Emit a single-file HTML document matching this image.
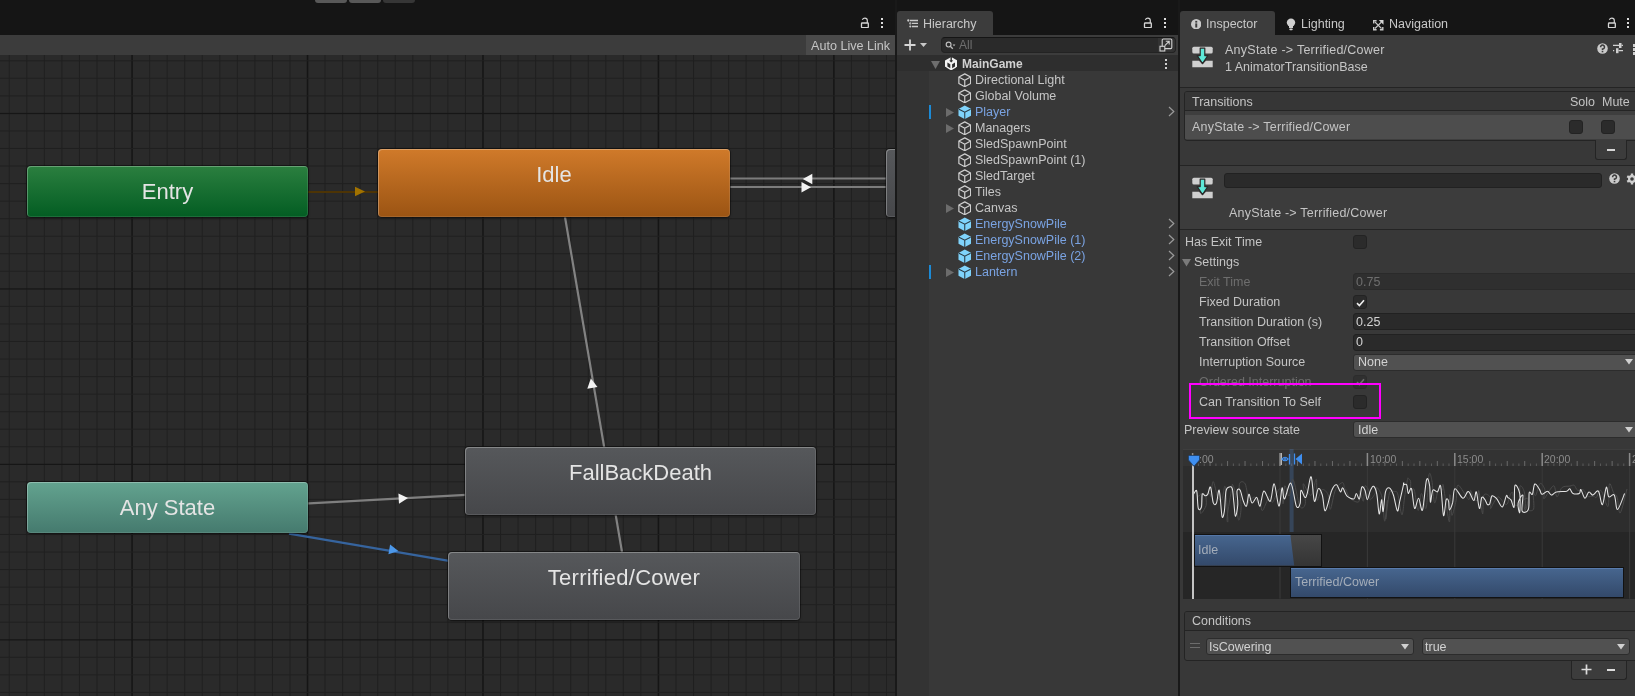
<!DOCTYPE html>
<html><head><meta charset="utf-8">
<style>
*{box-sizing:border-box;margin:0;padding:0}
html,body{width:1635px;height:696px;overflow:hidden;background:#151515;font-family:"Liberation Sans",sans-serif;}
.a{position:absolute}
.t{position:absolute;white-space:nowrap;will-change:transform;font-size:12.6px;color:#c4c4c4;line-height:16px}
.node{position:absolute;border-radius:4px;box-shadow:0 0 0 1px rgba(0,0,0,.35), 0 1px 3px rgba(0,0,0,.3), inset 1px 1px 0 rgba(255,255,255,.2), inset 0 0 0 1px rgba(255,255,255,.1)}
.nl{position:absolute;will-change:transform;left:0;right:0;top:15px;text-align:center;font-size:22px;line-height:22px;color:#e4e4e4}
</style></head><body>
<!-- GRAPH PANEL -->
<div class="a" style="left:0;top:0;width:895px;height:35px;background:#151515"></div>
<div class="a" style="left:315px;top:0;width:32px;height:3px;background:#585858;border-radius:0 0 3px 3px"></div>
<div class="a" style="left:349px;top:0;width:32px;height:3px;background:#585858;border-radius:0 0 3px 3px"></div>
<div class="a" style="left:383px;top:0;width:32px;height:3px;background:#363636;border-radius:0 0 3px 3px"></div>
<div class="a" style="left:0;top:35px;width:895px;height:20px;background:#3c3c3c"></div>
<div class="a" style="left:806px;top:35px;width:89px;height:20px;background:#4a4a4a"></div>
<div class="t" style="left:811px;top:37.6px;color:#c4c4c4">Auto Live Link</div>
<svg class="a" style="left:0;top:0" width="895" height="696">
<rect x="0" y="55" width="895" height="641" fill="#2a2a2a"/>
<rect x="8.75" y="55" width="1" height="641" fill="#202020"/>
<rect x="26.30" y="55" width="1" height="641" fill="#202020"/>
<rect x="43.84" y="55" width="1" height="641" fill="#202020"/>
<rect x="61.39" y="55" width="1" height="641" fill="#202020"/>
<rect x="78.93" y="55" width="1" height="641" fill="#202020"/>
<rect x="96.48" y="55" width="1" height="641" fill="#202020"/>
<rect x="114.02" y="55" width="1" height="641" fill="#202020"/>
<rect x="131.32" y="55" width="1.5" height="641" fill="#151515"/>
<rect x="149.12" y="55" width="1" height="641" fill="#202020"/>
<rect x="166.66" y="55" width="1" height="641" fill="#202020"/>
<rect x="184.21" y="55" width="1" height="641" fill="#202020"/>
<rect x="201.75" y="55" width="1" height="641" fill="#202020"/>
<rect x="219.30" y="55" width="1" height="641" fill="#202020"/>
<rect x="236.84" y="55" width="1" height="641" fill="#202020"/>
<rect x="254.39" y="55" width="1" height="641" fill="#202020"/>
<rect x="271.93" y="55" width="1" height="641" fill="#202020"/>
<rect x="289.48" y="55" width="1" height="641" fill="#202020"/>
<rect x="306.77" y="55" width="1.5" height="641" fill="#151515"/>
<rect x="324.57" y="55" width="1" height="641" fill="#202020"/>
<rect x="342.11" y="55" width="1" height="641" fill="#202020"/>
<rect x="359.66" y="55" width="1" height="641" fill="#202020"/>
<rect x="377.20" y="55" width="1" height="641" fill="#202020"/>
<rect x="394.75" y="55" width="1" height="641" fill="#202020"/>
<rect x="412.29" y="55" width="1" height="641" fill="#202020"/>
<rect x="429.84" y="55" width="1" height="641" fill="#202020"/>
<rect x="447.38" y="55" width="1" height="641" fill="#202020"/>
<rect x="464.93" y="55" width="1" height="641" fill="#202020"/>
<rect x="482.22" y="55" width="1.5" height="641" fill="#151515"/>
<rect x="500.02" y="55" width="1" height="641" fill="#202020"/>
<rect x="517.56" y="55" width="1" height="641" fill="#202020"/>
<rect x="535.11" y="55" width="1" height="641" fill="#202020"/>
<rect x="552.65" y="55" width="1" height="641" fill="#202020"/>
<rect x="570.20" y="55" width="1" height="641" fill="#202020"/>
<rect x="587.74" y="55" width="1" height="641" fill="#202020"/>
<rect x="605.29" y="55" width="1" height="641" fill="#202020"/>
<rect x="622.83" y="55" width="1" height="641" fill="#202020"/>
<rect x="640.38" y="55" width="1" height="641" fill="#202020"/>
<rect x="657.67" y="55" width="1.5" height="641" fill="#151515"/>
<rect x="675.46" y="55" width="1" height="641" fill="#202020"/>
<rect x="693.01" y="55" width="1" height="641" fill="#202020"/>
<rect x="710.55" y="55" width="1" height="641" fill="#202020"/>
<rect x="728.10" y="55" width="1" height="641" fill="#202020"/>
<rect x="745.64" y="55" width="1" height="641" fill="#202020"/>
<rect x="763.19" y="55" width="1" height="641" fill="#202020"/>
<rect x="780.73" y="55" width="1" height="641" fill="#202020"/>
<rect x="798.28" y="55" width="1" height="641" fill="#202020"/>
<rect x="815.82" y="55" width="1" height="641" fill="#202020"/>
<rect x="833.12" y="55" width="1.5" height="641" fill="#151515"/>
<rect x="850.91" y="55" width="1" height="641" fill="#202020"/>
<rect x="868.46" y="55" width="1" height="641" fill="#202020"/>
<rect x="886.00" y="55" width="1" height="641" fill="#202020"/>
<rect x="0" y="60.27" width="895" height="1" fill="#202020"/>
<rect x="0" y="77.81" width="895" height="1" fill="#202020"/>
<rect x="0" y="95.36" width="895" height="1" fill="#202020"/>
<rect x="0" y="112.90" width="895" height="1.2" fill="#161616"/>
<rect x="0" y="130.44" width="895" height="1" fill="#202020"/>
<rect x="0" y="147.99" width="895" height="1" fill="#202020"/>
<rect x="0" y="165.54" width="895" height="1" fill="#202020"/>
<rect x="0" y="183.08" width="895" height="1" fill="#202020"/>
<rect x="0" y="200.63" width="895" height="1" fill="#202020"/>
<rect x="0" y="218.17" width="895" height="1" fill="#202020"/>
<rect x="0" y="235.72" width="895" height="1" fill="#202020"/>
<rect x="0" y="253.26" width="895" height="1" fill="#202020"/>
<rect x="0" y="270.81" width="895" height="1" fill="#202020"/>
<rect x="0" y="288.35" width="895" height="1.2" fill="#161616"/>
<rect x="0" y="305.90" width="895" height="1" fill="#202020"/>
<rect x="0" y="323.44" width="895" height="1" fill="#202020"/>
<rect x="0" y="340.99" width="895" height="1" fill="#202020"/>
<rect x="0" y="358.53" width="895" height="1" fill="#202020"/>
<rect x="0" y="376.08" width="895" height="1" fill="#202020"/>
<rect x="0" y="393.62" width="895" height="1" fill="#202020"/>
<rect x="0" y="411.17" width="895" height="1" fill="#202020"/>
<rect x="0" y="428.71" width="895" height="1" fill="#202020"/>
<rect x="0" y="446.26" width="895" height="1" fill="#202020"/>
<rect x="0" y="463.80" width="895" height="1.2" fill="#161616"/>
<rect x="0" y="481.35" width="895" height="1" fill="#202020"/>
<rect x="0" y="498.89" width="895" height="1" fill="#202020"/>
<rect x="0" y="516.44" width="895" height="1" fill="#202020"/>
<rect x="0" y="533.98" width="895" height="1" fill="#202020"/>
<rect x="0" y="551.53" width="895" height="1" fill="#202020"/>
<rect x="0" y="569.07" width="895" height="1" fill="#202020"/>
<rect x="0" y="586.62" width="895" height="1" fill="#202020"/>
<rect x="0" y="604.16" width="895" height="1" fill="#202020"/>
<rect x="0" y="621.71" width="895" height="1" fill="#202020"/>
<rect x="0" y="639.25" width="895" height="1.2" fill="#161616"/>
<rect x="0" y="656.79" width="895" height="1" fill="#202020"/>
<rect x="0" y="674.34" width="895" height="1" fill="#202020"/>
<rect x="0" y="691.88" width="895" height="1" fill="#202020"/>
</svg>
<div class="a" style="left:0;top:55px;width:895px;height:641px;overflow:hidden">
<svg class="a" style="left:0;top:-55px" width="895" height="696">
<line x1="308" y1="192" x2="378" y2="192" stroke="#4d3405" stroke-width="2.2"/>
<polygon points="365.0,191.5 355.0,196.2 355.0,186.8" fill="#a17200"/>
<line x1="730" y1="178.5" x2="887" y2="178.5" stroke="#7c7c7c" stroke-width="2.2"/>
<line x1="730" y1="187" x2="887" y2="187" stroke="#7c7c7c" stroke-width="2.2"/>
<polygon points="802.8,179.0 812.3,173.8 812.3,184.2" fill="#f2f2f2"/>
<polygon points="811.0,187.2 801.5,192.4 801.5,182.0" fill="#f2f2f2"/>
<line x1="565" y1="217" x2="622" y2="552" stroke="#828282" stroke-width="2.2"/>
<polygon points="590.8,378.5 597.5,387.0 587.3,388.7" fill="#f2f2f2"/>
<line x1="300" y1="503.9" x2="466" y2="494.9" stroke="#7f7f7f" stroke-width="2.2"/>
<polygon points="408.0,498.1 399.0,503.8 398.4,493.4" fill="#f2f2f2"/>
<line x1="289" y1="533.7" x2="449" y2="560.9" stroke="#36649e" stroke-width="2.2"/>
<polygon points="398.4,550.9 388.4,554.3 390.1,544.4" fill="#4c98ea"/>
</svg>
<div class="node" style="left:27px;top:111px;width:281px;height:51px;background:linear-gradient(#2b7f3f,#035d23)"><div class="nl">Entry</div></div>
<div class="node" style="left:27px;top:427px;width:281px;height:51px;background:linear-gradient(#63a38f,#457a6e)"><div class="nl">Any State</div></div>
<div class="node" style="left:378px;top:94px;width:352px;height:68px;background:linear-gradient(#d07a2a,#9b5413)"><div class="nl">Idle</div></div>
<div class="node" style="left:465px;top:392px;width:351px;height:68px;background:linear-gradient(#56585b,#46474a)"><div class="nl">FallBackDeath</div></div>
<div class="node" style="left:448px;top:497px;width:352px;height:68px;background:linear-gradient(#56585b,#46474a)"><div class="nl" style="letter-spacing:.3px">Terrified/Cower</div></div>
<div class="node" style="left:886px;top:94px;width:40px;height:68px;background:linear-gradient(#56585b,#46474a)"></div>
</div>
<!-- separators -->
<div class="a" style="left:895px;top:0;width:2px;height:696px;background:#191919"></div>
<!-- HIERARCHY -->
<div class="a" style="left:897px;top:11px;width:96px;height:24px;background:#3c3c3c;border-radius:3px 3px 0 0"></div>
<div class="a" style="left:897px;top:35px;width:281px;height:20px;background:#3c3c3c"></div>
<div class="a" style="left:897px;top:55px;width:281px;height:641px;background:#383838"></div>
<div class="a" style="left:897px;top:71px;width:32px;height:625px;background:#333333"></div>
<div class="a" style="left:897px;top:55px;width:281px;height:16px;background:#2e2e2e"></div>
<svg width="0" height="0" style="position:absolute">
<defs>
<symbol id="cube" viewBox="0 0 14 15"><path d="M7 0.9 L13.1 4.2 L13.1 10.9 L7 14.2 L0.9 10.9 L0.9 4.2 Z M0.9 4.2 L7 7.5 L13.1 4.2 M7 7.5 L7 14.2" fill="none" stroke="#cfcfcf" stroke-width="1.25" stroke-linejoin="round"/></symbol>
<symbol id="prefab" viewBox="0 0 14 15"><path d="M7 0.5 L13.5 4 L13.5 11.1 L7 14.6 L0.5 11.1 L0.5 4 Z" fill="#7fd3fb"/><path d="M1 4.3 L7 7.5 L13 4.3 M7 7.5 L7 14.4" fill="none" stroke="#2b3a44" stroke-width="1.1"/></symbol>
<symbol id="tri-r" viewBox="0 0 8 9"><path d="M0 0 L8 4.5 L0 9 Z" fill="#6c6c6c"/></symbol>
<symbol id="chev" viewBox="0 0 7 11"><path d="M1 1 L5.8 5.5 L1 10" fill="none" stroke="#9a9a9a" stroke-width="1.2"/></symbol>
</defs></svg>
<svg class="a" style="left:903px;top:38px" width="30" height="14"><path d="M7 1.5 V12.5 M1.5 7 H12.5" stroke="#d6d6d6" stroke-width="1.8"/><path d="M17 5 L24 5 L20.5 9 Z" fill="#c8c8c8"/></svg>
<div class="a" style="left:940.5px;top:37px;width:235px;height:16px;background:#2a2a2a;border:1px solid #232323;border-top-color:#151515;border-radius:4px"></div>
<div class="a" style="left:1157.5px;top:38px;width:17px;height:14px;background:#333333;border-radius:0 3px 3px 0"></div>
<svg class="a" style="left:944.5px;top:40.5px" width="14" height="10"><circle cx="3.6" cy="3.6" r="2.4" fill="none" stroke="#bdbdbd" stroke-width="1.2"/><path d="M5.3 5.3 L7.8 7.8" stroke="#bdbdbd" stroke-width="1.3"/><path d="M7.6 3.6 L10.4 3.6 L9 5.3 Z" fill="#bdbdbd"/></svg>
<div class="t" style="left:959px;top:37px;font-size:12px;color:#6f6f6f">All</div>
<svg class="a" style="left:1159px;top:38px" width="14" height="14"><rect x="3.2" y="1" width="9.6" height="9.6" rx="1" fill="none" stroke="#d2d2d2" stroke-width="1.1"/><rect x="1" y="8.3" width="4.8" height="4.7" fill="#333" stroke="#d2d2d2" stroke-width="1.1"/><path d="M5.8 7.6 L10 3.4 M6.8 3.2 H10.2 V6.6" fill="none" stroke="#d2d2d2" stroke-width="1.1"/></svg>

<svg class="a" style="left:1143px;top:17px" width="10" height="11"><path d="M2.3 2.7 Q3.2 1.1 4.9 1.1 Q7.3 1.1 7.3 3.6 V6" fill="none" stroke="#d4d4d4" stroke-width="1.2"/><rect x="1.5" y="6" width="6.8" height="4.6" rx="0.6" fill="none" stroke="#d4d4d4" stroke-width="1.3"/></svg>
<div class="a" style="left:1163.6px;top:17.6px;width:2.2px;height:2.2px;background:#dcdcdc;box-shadow:0 4px 0 #dcdcdc,0 8px 0 #dcdcdc"></div>
<div class="t" style="left:923px;top:16px;font-size:12.5px;line-height:17px;color:#c8c8c8">Hierarchy</div>
<svg class="a" style="left:906px;top:18px" width="13" height="11"><path d="M4 2.5 H12 M6 5.4 H12 M6 8.5 H12" stroke="#cacaca" stroke-width="1.3"/><circle cx="2.3" cy="2.5" r="1.15" fill="#cacaca"/><circle cx="4.3" cy="5.4" r="1.1" fill="#cacaca"/><circle cx="4.3" cy="8.5" r="1.1" fill="#cacaca"/><path d="M4.3 3.8 V7.5" stroke="#888" stroke-width="0.6"/></svg>
<svg class="a" style="left:931px;top:61px" width="9" height="8"><path d="M0 0 H9 L4.5 8 Z" fill="#6e6e6e"/></svg>
<svg class="a" style="left:944.8px;top:57px" width="12.4" height="13.4" viewBox="0 0 12.4 13.4"><path d="M6.2 0 L12.4 3.4 L12.4 9.8 L6.2 13.4 L0 9.8 L0 3.4 Z" fill="#f2f2f2"/><path d="M5.5 0 H6.9 V3.3 L8.2 3.6 L6.2 5.4 L4.2 3.6 L5.5 3.3 Z" fill="#2d2d2d"/><path d="M2.4 5.6 L5.3 7.3 L5.3 11.3 L2.4 9.6 Z" fill="#2d2d2d"/><path d="M10 5.6 L7.1 7.3 L7.1 11.3 L10 9.6 Z" fill="#2d2d2d"/><path d="M0 9.8 L1.6 10.6 L0 11.6 Z M12.4 9.8 L10.8 10.6 L12.4 11.6 Z" fill="#2d2d2d"/></svg>
<div class="t" style="left:962px;top:56px;font-size:12px;line-height:17px;font-weight:bold;color:#d2d2d2">MainGame</div>
<div class="a" style="left:1165px;top:58.6px;width:2.2px;height:2.2px;background:#d0d0d0;box-shadow:0 4px 0 #d0d0d0,0 8px 0 #d0d0d0"></div>
<svg class="a" style="left:957.8px;top:72.8px" width="13.5" height="14.5" viewBox="0 0 14 15"><use href="#cube"/></svg>
<div class="t" style="left:975px;top:72.00px;font-size:12.5px;line-height:17px;color:#c6c6c6">Directional Light</div>
<svg class="a" style="left:957.8px;top:88.8px" width="13.5" height="14.5" viewBox="0 0 14 15"><use href="#cube"/></svg>
<div class="t" style="left:975px;top:88.00px;font-size:12.5px;line-height:17px;color:#c6c6c6">Global Volume</div>
<div class="a" style="left:929px;top:105px;width:2px;height:14px;background:#1c8ad6"></div>
<svg class="a" style="left:946px;top:108px" width="8" height="9"><use href="#tri-r"/></svg>
<svg class="a" style="left:957.8px;top:104.8px" width="13.5" height="14.5" viewBox="0 0 14 15"><use href="#prefab"/></svg>
<div class="t" style="left:975px;top:104.00px;font-size:12.5px;line-height:17px;color:#7aa3e2">Player</div>
<svg class="a" style="left:1167.5px;top:105.5px" width="7" height="11"><use href="#chev"/></svg>
<svg class="a" style="left:946px;top:124px" width="8" height="9"><use href="#tri-r"/></svg>
<svg class="a" style="left:957.8px;top:120.8px" width="13.5" height="14.5" viewBox="0 0 14 15"><use href="#cube"/></svg>
<div class="t" style="left:975px;top:120.00px;font-size:12.5px;line-height:17px;color:#c6c6c6">Managers</div>
<svg class="a" style="left:957.8px;top:136.8px" width="13.5" height="14.5" viewBox="0 0 14 15"><use href="#cube"/></svg>
<div class="t" style="left:975px;top:136.00px;font-size:12.5px;line-height:17px;color:#c6c6c6">SledSpawnPoint</div>
<svg class="a" style="left:957.8px;top:152.8px" width="13.5" height="14.5" viewBox="0 0 14 15"><use href="#cube"/></svg>
<div class="t" style="left:975px;top:152.00px;font-size:12.5px;line-height:17px;color:#c6c6c6">SledSpawnPoint (1)</div>
<svg class="a" style="left:957.8px;top:168.8px" width="13.5" height="14.5" viewBox="0 0 14 15"><use href="#cube"/></svg>
<div class="t" style="left:975px;top:168.00px;font-size:12.5px;line-height:17px;color:#c6c6c6">SledTarget</div>
<svg class="a" style="left:957.8px;top:184.8px" width="13.5" height="14.5" viewBox="0 0 14 15"><use href="#cube"/></svg>
<div class="t" style="left:975px;top:184.00px;font-size:12.5px;line-height:17px;color:#c6c6c6">Tiles</div>
<svg class="a" style="left:946px;top:204px" width="8" height="9"><use href="#tri-r"/></svg>
<svg class="a" style="left:957.8px;top:200.8px" width="13.5" height="14.5" viewBox="0 0 14 15"><use href="#cube"/></svg>
<div class="t" style="left:975px;top:200.00px;font-size:12.5px;line-height:17px;color:#c6c6c6">Canvas</div>
<svg class="a" style="left:957.8px;top:216.8px" width="13.5" height="14.5" viewBox="0 0 14 15"><use href="#prefab"/></svg>
<div class="t" style="left:975px;top:216.00px;font-size:12.5px;line-height:17px;color:#7aa3e2">EnergySnowPile</div>
<svg class="a" style="left:1167.5px;top:217.5px" width="7" height="11"><use href="#chev"/></svg>
<svg class="a" style="left:957.8px;top:232.8px" width="13.5" height="14.5" viewBox="0 0 14 15"><use href="#prefab"/></svg>
<div class="t" style="left:975px;top:232.00px;font-size:12.5px;line-height:17px;color:#7aa3e2">EnergySnowPile (1)</div>
<svg class="a" style="left:1167.5px;top:233.5px" width="7" height="11"><use href="#chev"/></svg>
<svg class="a" style="left:957.8px;top:248.8px" width="13.5" height="14.5" viewBox="0 0 14 15"><use href="#prefab"/></svg>
<div class="t" style="left:975px;top:248.00px;font-size:12.5px;line-height:17px;color:#7aa3e2">EnergySnowPile (2)</div>
<svg class="a" style="left:1167.5px;top:249.5px" width="7" height="11"><use href="#chev"/></svg>
<div class="a" style="left:929px;top:265px;width:2px;height:14px;background:#1c8ad6"></div>
<svg class="a" style="left:946px;top:268px" width="8" height="9"><use href="#tri-r"/></svg>
<svg class="a" style="left:957.8px;top:264.8px" width="13.5" height="14.5" viewBox="0 0 14 15"><use href="#prefab"/></svg>
<div class="t" style="left:975px;top:264.00px;font-size:12.5px;line-height:17px;color:#7aa3e2">Lantern</div>
<svg class="a" style="left:1167.5px;top:265.5px" width="7" height="11"><use href="#chev"/></svg>
<div class="a" style="left:1178px;top:0;width:2px;height:696px;background:#191919"></div>
<!-- INSPECTOR -->
<div class="a" style="left:1180px;top:11px;width:95px;height:24px;background:#3c3c3c;border-radius:3px 3px 0 0"></div>
<div class="a" style="left:1180px;top:35px;width:455px;height:661px;background:#383838"></div>
<div class="a" style="left:1180px;top:35px;width:455px;height:52px;background:#3c3c3c"></div>
<svg class="a" style="left:1190.9px;top:19px" width="10.4" height="10.4" viewBox="0 0 10 10"><circle cx="5" cy="5" r="5" fill="#c9c9c9"/><rect x="4.1" y="4.2" width="1.9" height="4" fill="#3c3c3c"/><rect x="4.1" y="1.8" width="1.9" height="1.7" fill="#3c3c3c"/></svg>
<div class="t" style="left:1206.4px;top:15.87px;font-size:12.5px;line-height:17px;color:#c8c8c8;">Inspector</div>
<svg class="a" style="left:1286px;top:18px" width="10" height="13" viewBox="0 0 10 13"><circle cx="5" cy="4.6" r="4.2" fill="#cfcfcf"/><rect x="3" y="7.5" width="4" height="2.5" fill="#cfcfcf"/><rect x="3.3" y="10.6" width="3.4" height="1.6" rx="0.8" fill="#cfcfcf"/></svg>
<div class="t" style="left:1301.3px;top:15.87px;font-size:12.5px;line-height:17px;color:#c8c8c8;">Lighting</div>
<svg class="a" style="left:1373px;top:20px" width="10.5" height="10.5" viewBox="0 0 10.5 10.5"><path d="M0.7 3.6 V0.7 H3.6 M0.7 6.9 V9.8 H3.6 M6.9 9.8 H9.8 V6.9" fill="none" stroke="#c8c8c8" stroke-width="1.4"/><path d="M5.8 0 H10.5 V4.7 Z" fill="#d8d8d8"/><path d="M2 8.5 L8.5 2 M2 2 L8.5 8.5" stroke="#c8c8c8" stroke-width="1.1"/></svg>
<div class="t" style="left:1389px;top:15.87px;font-size:12.5px;line-height:17px;color:#c8c8c8;">Navigation</div>
<svg class="a" style="left:1606.5px;top:17px" width="10" height="11"><path d="M2.3 2.7 Q3.2 1.1 4.9 1.1 Q7.3 1.1 7.3 3.6 V6" fill="none" stroke="#d4d4d4" stroke-width="1.2"/><rect x="1.5" y="6" width="6.8" height="4.6" rx="0.6" fill="none" stroke="#d4d4d4" stroke-width="1.3"/></svg>
<div class="a" style="left:1626.7px;top:17.6px;width:2.2px;height:2.2px;background:#dcdcdc;box-shadow:0 4px 0 #dcdcdc,0 8px 0 #dcdcdc"></div>
<svg class="a" style="left:860px;top:17px" width="10" height="11"><path d="M2.3 2.7 Q3.2 1.1 4.9 1.1 Q7.3 1.1 7.3 3.6 V6" fill="none" stroke="#d4d4d4" stroke-width="1.2"/><rect x="1.5" y="6" width="6.8" height="4.6" rx="0.6" fill="none" stroke="#d4d4d4" stroke-width="1.3"/></svg>
<div class="a" style="left:880.9px;top:17.6px;width:2.2px;height:2.2px;background:#dcdcdc;box-shadow:0 4px 0 #dcdcdc,0 8px 0 #dcdcdc"></div>
<svg class="a" style="left:1191.8px;top:45.8px" width="21" height="22" viewBox="0 0 21 22"><rect x="0.3" y="0.8" width="20.4" height="6.6" rx="1.5" fill="#cfcfcf"/><path d="M0.3 14.8 H7 L10.5 18.3 L14 14.8 H20.7 V21.3 H0.3 Z" fill="#cfcfcf"/><path d="M8.2 2.2 H12.8 V9.6 H15.8 L10.5 17.6 L5.2 9.6 H8.2 Z" fill="#5ee9d9" stroke="#2a2a2a" stroke-width="1.2" stroke-linejoin="round"/></svg>
<div class="t" style="left:1224.9px;top:41.57px;font-size:12.5px;line-height:17px;color:#c6c6c6;letter-spacing:.25px">AnyState -&gt; Terrified/Cower</div>
<div class="t" style="left:1224.9px;top:59.37px;font-size:12.5px;line-height:17px;color:#c6c6c6;">1 AnimatorTransitionBase</div>
<svg class="a" style="left:1596.6px;top:42.6px" width="11" height="11" viewBox="0 0 11 11"><circle cx="5.5" cy="5.5" r="5.3" fill="#cacaca"/><path d="M3.6 4.2 A1.95 1.95 0 1 1 5.5 6 V7" fill="none" stroke="#3c3c3c" stroke-width="1.5"/><rect x="4.7" y="7.8" width="1.6" height="1.5" fill="#3c3c3c"/></svg>
<svg class="a" style="left:1612px;top:42px" width="12" height="12" viewBox="0 0 12 12"><path d="M1 3.4 H7 M9.5 3.4 H11 M1 8.6 H2.2 M6.5 8.6 H11" stroke="#d0d0d0" stroke-width="1.2"/><rect x="7" y="1" width="2.5" height="5" fill="#d0d0d0"/><rect x="4" y="6.2" width="2.5" height="5" fill="#d0d0d0"/></svg>
<div class="a" style="left:1632.5px;top:44px;width:3px;height:2.5px;background:#d0d0d0;box-shadow:0 4px 0 #d0d0d0,0 8px 0 #d0d0d0"></div>
<div class="a" style="left:1180px;top:87px;width:455px;height:1px;background:#242424"></div>
<div class="a" style="left:1184.2px;top:91.2px;width:460px;height:50px;border:1px solid #242424;border-radius:3px;background:#3e3e3e;overflow:hidden">
<div class="a" style="left:0;top:0;width:460px;height:18.5px;background:#363636;border-bottom:1px solid #242424"></div>
<div class="a" style="left:0;top:22.5px;width:460px;height:24px;background:#4d4d4d"></div>
</div>
<div class="t" style="left:1192.4px;top:93.57px;font-size:12.5px;line-height:17px;color:#c4c4c4;">Transitions</div>
<div class="t" style="left:1570px;top:93.57px;font-size:12.5px;line-height:17px;color:#c4c4c4;">Solo</div>
<div class="t" style="left:1602px;top:93.57px;font-size:12.5px;line-height:17px;color:#c4c4c4;">Mute</div>
<div class="t" style="left:1192.4px;top:118.97px;font-size:12.5px;line-height:17px;color:#c4c4c4;letter-spacing:.2px">AnyState -&gt; Terrified/Cower</div>
<div class="a" style="left:1569px;top:120px;width:14px;height:14px;background:#2b2b2b;border:1px solid #232323;border-radius:3px"></div>
<div class="a" style="left:1601px;top:120px;width:14px;height:14px;background:#2b2b2b;border:1px solid #232323;border-radius:3px"></div>
<div class="a" style="left:1595.4px;top:140px;width:32px;height:20px;background:#3c3c3c;border:1px solid #242424;border-top:none;border-radius:0 0 3px 3px"></div>
<div class="a" style="left:1606.5px;top:149px;width:8px;height:2px;background:#d6d6d6"></div>

<div class="a" style="left:1180px;top:165px;width:455px;height:1px;background:#242424"></div>
<div class="a" style="left:1180px;top:166px;width:455px;height:63px;background:#3c3c3c"></div>
<svg class="a" style="left:1191.8px;top:176.9px" width="21" height="22" viewBox="0 0 21 22"><rect x="0.3" y="0.8" width="20.4" height="6.6" rx="1.5" fill="#cfcfcf"/><path d="M0.3 14.8 H7 L10.5 18.3 L14 14.8 H20.7 V21.3 H0.3 Z" fill="#cfcfcf"/><path d="M8.2 2.2 H12.8 V9.6 H15.8 L10.5 17.6 L5.2 9.6 H8.2 Z" fill="#5ee9d9" stroke="#2a2a2a" stroke-width="1.2" stroke-linejoin="round"/></svg>
<div class="a" style="left:1224px;top:172.5px;width:377.5px;height:15px;background:#2a2a2a;border:1px solid #212121;border-radius:3px"></div>
<svg class="a" style="left:1608.9px;top:173.3px" width="11" height="11" viewBox="0 0 11 11"><circle cx="5.5" cy="5.5" r="5.3" fill="#cacaca"/><path d="M3.6 4.2 A1.95 1.95 0 1 1 5.5 6 V7" fill="none" stroke="#3c3c3c" stroke-width="1.5"/><rect x="4.7" y="7.8" width="1.6" height="1.5" fill="#3c3c3c"/></svg>
<svg class="a" style="left:1626px;top:173px" width="12" height="12" viewBox="0 0 12 12"><circle cx="6" cy="6" r="4" fill="#d0d0d0"/><rect x="4.8" y="0.5" width="2.4" height="3" fill="#d0d0d0" transform="rotate(0 6 6)"/><rect x="4.8" y="0.5" width="2.4" height="3" fill="#d0d0d0" transform="rotate(60 6 6)"/><rect x="4.8" y="0.5" width="2.4" height="3" fill="#d0d0d0" transform="rotate(120 6 6)"/><rect x="4.8" y="0.5" width="2.4" height="3" fill="#d0d0d0" transform="rotate(180 6 6)"/><rect x="4.8" y="0.5" width="2.4" height="3" fill="#d0d0d0" transform="rotate(240 6 6)"/><rect x="4.8" y="0.5" width="2.4" height="3" fill="#d0d0d0" transform="rotate(300 6 6)"/><circle cx="6" cy="6" r="1.8" fill="#3c3c3c"/></svg>
<div class="t" style="left:1229px;top:205.27px;font-size:12.5px;line-height:17px;color:#c4c4c4;letter-spacing:.2px">AnyState -&gt; Terrified/Cower</div>
<div class="a" style="left:1180px;top:229px;width:455px;height:1px;background:#242424"></div>
<div class="t" style="left:1184.8px;top:234.37px;font-size:12.5px;line-height:17px;color:#c4c4c4;">Has Exit Time</div>
<div class="a" style="left:1353.4px;top:235px;width:14px;height:14px;background:#2b2b2b;border:1px solid #232323;border-radius:3px;"></div>
<svg class="a" style="left:1182px;top:259.2px" width="9" height="8"><path d="M0 0 H9 L4.5 7.5 Z" fill="#7a7a7a"/></svg>
<div class="t" style="left:1194.3px;top:253.97px;font-size:12.5px;line-height:17px;color:#c4c4c4;">Settings</div>
<div class="t" style="left:1199.4px;top:274.17px;font-size:12.5px;line-height:17px;color:#6e6e6e;">Exit Time</div>
<div class="a" style="left:1353.4px;top:273.3px;width:290px;height:17px;background:#2f2f2f;border:1px solid #2a2a2a;border-radius:3px"></div>
<div class="t" style="left:1356px;top:274.17px;font-size:12.5px;line-height:17px;color:#6e6e6e;">0.75</div>
<div class="t" style="left:1199.4px;top:294.27px;font-size:12.5px;line-height:17px;color:#c4c4c4;">Fixed Duration</div>
<div class="a" style="left:1353.4px;top:295.2px;width:14px;height:14px;background:#2b2b2b;border:1px solid #232323;border-radius:3px;"><svg class="a" style="left:2px;top:2.5px" width="9" height="8" viewBox="0 0 9 8"><path d="M1 4.2 L3.4 6.5 L8 1.3" fill="none" stroke="#eeeeee" stroke-width="1.6"/></svg></div>
<div class="t" style="left:1199.4px;top:314.27px;font-size:12.5px;line-height:17px;color:#c4c4c4;">Transition Duration (s)</div>
<div class="a" style="left:1353.4px;top:313.3px;width:290px;height:17px;background:#2a2a2a;border:1px solid #212121;border-radius:3px"></div>
<div class="t" style="left:1356px;top:314.27px;font-size:12.5px;line-height:17px;color:#d2d2d2;">0.25</div>
<div class="t" style="left:1199.4px;top:334.27px;font-size:12.5px;line-height:17px;color:#c4c4c4;">Transition Offset</div>
<div class="a" style="left:1353.4px;top:333.5px;width:290px;height:17px;background:#2a2a2a;border:1px solid #212121;border-radius:3px"></div>
<div class="t" style="left:1356px;top:334.27px;font-size:12.5px;line-height:17px;color:#d2d2d2;">0</div>
<div class="t" style="left:1199.4px;top:354.27px;font-size:12.5px;line-height:17px;color:#c4c4c4;">Interruption Source</div>
<div class="a" style="left:1353.4px;top:353.7px;width:290px;height:17px;background:#515151;border:1px solid #2c2c2c;border-radius:3px"></div>
<div class="t" style="left:1357.6px;top:354.27px;font-size:12.5px;line-height:17px;color:#d2d2d2;">None</div>
<svg class="a" style="left:1624.5px;top:359px" width="8" height="6"><path d="M0 0 H8 L4 5.5 Z" fill="#d0d0d0"/></svg>
<div class="t" style="left:1199.4px;top:374.27px;font-size:12.5px;line-height:17px;color:#6e6e6e;">Ordered Interruption</div>
<div class="a" style="left:1353.4px;top:374.9px;width:14px;height:14px;background:#2b2b2b;border:1px solid #232323;border-radius:3px;opacity:.55;"><svg class="a" style="left:2px;top:2.5px" width="9" height="8" viewBox="0 0 9 8"><path d="M1 4.2 L3.4 6.5 L8 1.3" fill="none" stroke="#9a9a9a" stroke-width="1.6"/></svg></div>
<div class="t" style="left:1199.4px;top:394.37px;font-size:12.5px;line-height:17px;color:#c4c4c4;">Can Transition To Self</div>
<div class="a" style="left:1353.4px;top:394.8px;width:14px;height:14px;background:#2b2b2b;border:1px solid #232323;border-radius:3px;"></div>
<div class="a" style="left:1189px;top:383px;width:192px;height:36px;border:2px solid #ff00ff"></div>
<div class="t" style="left:1184.3px;top:422.37px;font-size:12.5px;line-height:17px;color:#c4c4c4;">Preview source state</div>
<div class="a" style="left:1353.4px;top:421.4px;width:290px;height:17px;background:#515151;border:1px solid #2c2c2c;border-radius:3px"></div>
<div class="t" style="left:1357.6px;top:422.37px;font-size:12.5px;line-height:17px;color:#d2d2d2;">Idle</div>
<svg class="a" style="left:1624.5px;top:427px" width="8" height="6"><path d="M0 0 H8 L4 5.5 Z" fill="#d0d0d0"/></svg>
<div class="a" style="left:1183.4px;top:449.3px;width:451.6px;height:149.7px;background:#262626;overflow:hidden">
<div class="a" style="left:0;top:0;width:100%;height:17px;background:#333333;border-top:1px solid #3e3e3e"></div>
<div class="a" style="left:0;top:17px;width:100%;height:66px;background:#2d2d2d"></div>
</div>
<svg class="a" style="left:1183.4px;top:449.3px;overflow:hidden" width="451.6" height="149.7"><rect x="96.50" y="17" width="1" height="132.7" fill="#3a3a3a"/><rect x="183.90" y="17" width="1" height="132.7" fill="#3a3a3a"/><rect x="271.30" y="17" width="1" height="132.7" fill="#3a3a3a"/><rect x="358.70" y="17" width="1" height="132.7" fill="#3a3a3a"/><rect x="446.10" y="17" width="1" height="132.7" fill="#3a3a3a"/><rect x="8.85" y="4" width="1.5" height="13" fill="#8a8a8a"/><rect x="14.93" y="14.5" width="1" height="2.5" fill="#5a5a5a"/><rect x="20.75" y="14.5" width="1" height="2.5" fill="#5a5a5a"/><rect x="26.58" y="12" width="1" height="5" fill="#6a6a6a"/><rect x="32.41" y="14.5" width="1" height="2.5" fill="#5a5a5a"/><rect x="38.23" y="14.5" width="1" height="2.5" fill="#5a5a5a"/><rect x="44.06" y="12" width="1" height="5" fill="#6a6a6a"/><rect x="49.89" y="14.5" width="1" height="2.5" fill="#5a5a5a"/><rect x="55.71" y="14.5" width="1" height="2.5" fill="#5a5a5a"/><rect x="61.54" y="12" width="1" height="5" fill="#6a6a6a"/><rect x="67.37" y="14.5" width="1" height="2.5" fill="#5a5a5a"/><rect x="73.19" y="14.5" width="1" height="2.5" fill="#5a5a5a"/><rect x="79.02" y="12" width="1" height="5" fill="#6a6a6a"/><rect x="84.85" y="14.5" width="1" height="2.5" fill="#5a5a5a"/><rect x="90.67" y="14.5" width="1" height="2.5" fill="#5a5a5a"/><rect x="96.25" y="4" width="1.5" height="13" fill="#8a8a8a"/><rect x="102.33" y="14.5" width="1" height="2.5" fill="#5a5a5a"/><rect x="108.15" y="14.5" width="1" height="2.5" fill="#5a5a5a"/><rect x="113.98" y="12" width="1" height="5" fill="#6a6a6a"/><rect x="119.81" y="14.5" width="1" height="2.5" fill="#5a5a5a"/><rect x="125.63" y="14.5" width="1" height="2.5" fill="#5a5a5a"/><rect x="131.46" y="12" width="1" height="5" fill="#6a6a6a"/><rect x="137.29" y="14.5" width="1" height="2.5" fill="#5a5a5a"/><rect x="143.11" y="14.5" width="1" height="2.5" fill="#5a5a5a"/><rect x="148.94" y="12" width="1" height="5" fill="#6a6a6a"/><rect x="154.77" y="14.5" width="1" height="2.5" fill="#5a5a5a"/><rect x="160.59" y="14.5" width="1" height="2.5" fill="#5a5a5a"/><rect x="166.42" y="12" width="1" height="5" fill="#6a6a6a"/><rect x="172.25" y="14.5" width="1" height="2.5" fill="#5a5a5a"/><rect x="178.07" y="14.5" width="1" height="2.5" fill="#5a5a5a"/><rect x="183.65" y="4" width="1.5" height="13" fill="#8a8a8a"/><rect x="189.73" y="14.5" width="1" height="2.5" fill="#5a5a5a"/><rect x="195.55" y="14.5" width="1" height="2.5" fill="#5a5a5a"/><rect x="201.38" y="12" width="1" height="5" fill="#6a6a6a"/><rect x="207.21" y="14.5" width="1" height="2.5" fill="#5a5a5a"/><rect x="213.03" y="14.5" width="1" height="2.5" fill="#5a5a5a"/><rect x="218.86" y="12" width="1" height="5" fill="#6a6a6a"/><rect x="224.69" y="14.5" width="1" height="2.5" fill="#5a5a5a"/><rect x="230.51" y="14.5" width="1" height="2.5" fill="#5a5a5a"/><rect x="236.34" y="12" width="1" height="5" fill="#6a6a6a"/><rect x="242.17" y="14.5" width="1" height="2.5" fill="#5a5a5a"/><rect x="247.99" y="14.5" width="1" height="2.5" fill="#5a5a5a"/><rect x="253.82" y="12" width="1" height="5" fill="#6a6a6a"/><rect x="259.65" y="14.5" width="1" height="2.5" fill="#5a5a5a"/><rect x="265.47" y="14.5" width="1" height="2.5" fill="#5a5a5a"/><rect x="271.05" y="4" width="1.5" height="13" fill="#8a8a8a"/><rect x="277.13" y="14.5" width="1" height="2.5" fill="#5a5a5a"/><rect x="282.95" y="14.5" width="1" height="2.5" fill="#5a5a5a"/><rect x="288.78" y="12" width="1" height="5" fill="#6a6a6a"/><rect x="294.61" y="14.5" width="1" height="2.5" fill="#5a5a5a"/><rect x="300.43" y="14.5" width="1" height="2.5" fill="#5a5a5a"/><rect x="306.26" y="12" width="1" height="5" fill="#6a6a6a"/><rect x="312.09" y="14.5" width="1" height="2.5" fill="#5a5a5a"/><rect x="317.91" y="14.5" width="1" height="2.5" fill="#5a5a5a"/><rect x="323.74" y="12" width="1" height="5" fill="#6a6a6a"/><rect x="329.57" y="14.5" width="1" height="2.5" fill="#5a5a5a"/><rect x="335.39" y="14.5" width="1" height="2.5" fill="#5a5a5a"/><rect x="341.22" y="12" width="1" height="5" fill="#6a6a6a"/><rect x="347.05" y="14.5" width="1" height="2.5" fill="#5a5a5a"/><rect x="352.87" y="14.5" width="1" height="2.5" fill="#5a5a5a"/><rect x="358.45" y="4" width="1.5" height="13" fill="#8a8a8a"/><rect x="364.53" y="14.5" width="1" height="2.5" fill="#5a5a5a"/><rect x="370.35" y="14.5" width="1" height="2.5" fill="#5a5a5a"/><rect x="376.18" y="12" width="1" height="5" fill="#6a6a6a"/><rect x="382.01" y="14.5" width="1" height="2.5" fill="#5a5a5a"/><rect x="387.83" y="14.5" width="1" height="2.5" fill="#5a5a5a"/><rect x="393.66" y="12" width="1" height="5" fill="#6a6a6a"/><rect x="399.49" y="14.5" width="1" height="2.5" fill="#5a5a5a"/><rect x="405.31" y="14.5" width="1" height="2.5" fill="#5a5a5a"/><rect x="411.14" y="12" width="1" height="5" fill="#6a6a6a"/><rect x="416.97" y="14.5" width="1" height="2.5" fill="#5a5a5a"/><rect x="422.79" y="14.5" width="1" height="2.5" fill="#5a5a5a"/><rect x="428.62" y="12" width="1" height="5" fill="#6a6a6a"/><rect x="434.45" y="14.5" width="1" height="2.5" fill="#5a5a5a"/><rect x="440.27" y="14.5" width="1" height="2.5" fill="#5a5a5a"/><rect x="445.85" y="4" width="1.5" height="13" fill="#8a8a8a"/><rect x="106.60" y="0" width="4" height="83" fill="#4a78b8" fill-opacity="0.32"/><path d="M15.0,47.7 C15.8,47.3 19.1,42.5 19.5,45.3 C19.9,48.0 16.8,62.4 17.4,64.2 C18.0,66.1 22.1,59.5 23.1,56.5 C24.0,53.4 22.5,47.9 23.1,45.9 C23.7,43.8 25.9,44.0 26.7,44.2 C27.5,44.4 27.3,49.1 27.9,47.1 C28.5,45.2 29.0,32.3 30.2,32.5 C31.3,32.7 33.3,45.1 34.8,48.1 C36.2,51.1 37.7,52.3 39.0,50.5 C40.2,48.7 41.2,34.2 42.2,37.6 C43.2,40.9 44.5,65.5 44.9,70.5 C45.2,75.4 43.5,72.8 44.2,67.4 C44.9,62.1 47.9,43.9 48.8,38.6 C49.7,33.3 49.1,35.3 49.6,35.7 C50.0,36.1 51.0,38.2 51.5,41.1 C52.1,44.0 52.2,48.1 52.9,53.1 C53.6,58.1 54.8,70.4 55.7,71.2 C56.6,72.0 58.0,63.8 58.1,57.8 C58.2,51.9 55.6,39.4 56.3,35.6 C56.9,31.7 60.7,32.0 62.2,34.9 C63.7,37.8 64.9,50.1 65.5,53.0 C66.1,55.9 64.5,53.1 65.6,52.3 C66.6,51.4 70.2,47.8 71.7,48.0 C73.2,48.3 73.9,53.4 74.8,53.9 C75.7,54.5 76.4,49.9 77.2,51.1 C78.0,52.4 77.9,62.2 79.4,61.6 C80.9,61.0 84.6,49.0 86.3,47.6 C88.0,46.2 87.8,54.6 89.6,53.3 C91.3,52.0 95.1,39.3 96.9,39.6 C98.6,39.8 99.3,55.3 100.1,54.8 C100.9,54.4 100.8,38.1 101.8,36.8 C102.8,35.6 104.9,48.2 106.2,47.1 C107.6,46.1 108.2,28.7 110.0,30.4 C111.8,32.1 114.9,53.3 116.9,57.3 C119.0,61.2 121.9,57.8 122.4,54.1 C123.0,50.4 119.6,36.4 120.1,34.8 C120.7,33.3 124.3,43.1 125.9,44.8 C127.4,46.4 127.9,47.2 129.2,44.7 C130.4,42.3 132.6,29.0 133.4,30.1 C134.2,31.2 133.0,49.5 134.0,51.2 C134.9,53.0 137.3,41.6 139.1,40.7 C141.0,39.8 143.8,42.6 145.2,45.8 C146.5,49.1 146.1,61.1 147.3,60.3 C148.5,59.4 150.4,45.3 152.4,40.9 C154.4,36.4 157.9,33.9 159.5,33.6 C161.0,33.2 160.9,37.7 161.4,38.9 C162.0,40.1 161.9,39.1 162.9,40.8 C163.9,42.6 165.1,47.3 167.2,49.3 C169.3,51.3 174.1,54.1 175.7,52.8 C177.2,51.5 175.9,41.8 176.7,41.7 C177.5,41.6 179.5,53.0 180.4,52.2 C181.2,51.4 181.0,38.4 182.0,36.9 C183.0,35.4 185.4,40.7 186.3,43.0 C187.2,45.3 186.3,50.7 187.3,50.7 C188.4,50.8 191.6,45.5 192.8,43.4 C193.9,41.3 193.0,37.5 194.0,38.4 C195.1,39.3 197.9,43.1 199.1,48.7 C200.4,54.3 200.8,71.8 201.7,72.2 C202.5,72.6 204.2,51.5 204.4,51.2 C204.6,50.9 202.5,71.3 202.8,70.2 C203.1,69.0 205.0,48.9 206.4,44.3 C207.8,39.7 210.0,42.6 211.4,42.7 C212.8,42.8 213.5,41.1 214.7,44.9 C216.0,48.8 217.7,65.2 218.9,65.8 C220.0,66.3 220.7,54.0 221.6,48.1 C222.6,42.2 223.8,33.6 224.5,30.5 C225.1,27.4 224.8,29.4 225.3,29.7 C225.8,30.0 227.2,30.4 227.6,32.3 C228.0,34.3 227.2,40.0 227.8,41.4 C228.4,42.8 230.0,37.5 231.2,40.8 C232.4,44.2 233.9,60.9 235.1,61.5 C236.4,62.2 237.2,44.8 238.5,44.5 C239.9,44.1 241.9,62.4 243.1,59.3 C244.4,56.3 245.0,30.7 245.9,26.0 C246.9,21.4 247.8,26.6 248.8,31.2 C249.7,35.9 250.5,52.5 251.6,53.8 C252.8,55.1 254.3,41.2 255.6,39.0 C257.0,36.9 259.0,41.3 259.8,40.9 C260.6,40.5 259.2,31.6 260.3,36.9 C261.4,42.2 265.2,71.3 266.3,72.9 C267.4,74.5 266.4,49.6 266.6,46.4 C266.9,43.2 267.7,50.5 268.0,53.8 C268.4,57.2 268.1,66.9 269.0,66.4 C269.8,66.0 272.0,56.3 273.1,51.3 C274.1,46.2 273.0,36.2 275.1,36.1 C277.2,35.9 283.6,49.5 285.7,50.4 C287.8,51.3 286.8,41.5 287.6,41.3 C288.4,41.1 289.4,47.8 290.6,49.4 C291.8,51.0 294.0,52.4 294.9,51.1 C295.7,49.8 295.0,39.4 295.8,41.7 C296.6,44.0 298.8,64.1 299.6,64.9 C300.5,65.6 299.5,48.8 300.9,46.1 C302.2,43.4 306.6,46.5 307.7,48.7 C308.8,50.9 307.1,58.4 307.4,59.5 C307.8,60.5 308.8,56.9 309.9,55.1 C310.9,53.4 312.6,50.2 313.7,49.1 C314.7,48.0 314.7,47.2 316.3,48.3 C317.9,49.4 321.6,56.0 323.5,55.5 C325.4,55.0 326.4,47.3 327.4,45.4 C328.5,43.4 329.2,42.3 329.8,43.9 C330.3,45.6 329.8,53.5 331.0,55.2 C332.1,56.8 335.7,56.9 336.7,53.9 C337.7,50.9 336.2,38.9 337.0,37.2 C337.9,35.5 340.7,39.8 341.5,44.0 C342.4,48.2 342.5,61.2 342.4,62.4 C342.2,63.7 340.0,53.5 340.5,51.4 C341.0,49.3 344.6,48.4 345.2,49.8 C345.8,51.3 343.0,58.4 343.9,60.1 C344.8,61.8 349.5,62.8 350.6,60.1 C351.6,57.3 349.8,45.7 350.2,43.4 C350.5,41.2 351.6,48.0 352.7,46.5 C353.9,45.0 355.5,35.4 357.1,34.5 C358.6,33.5 361.2,38.2 361.9,40.8 C362.5,43.3 359.6,50.4 361.1,49.7 C362.5,49.0 368.4,37.1 370.5,36.8 C372.7,36.4 372.4,47.5 373.9,47.8 C375.3,48.1 376.9,40.3 379.1,38.5 C381.2,36.7 384.7,37.5 386.8,37.1 C388.8,36.8 389.9,35.6 391.2,36.3 C392.5,37.0 393.0,40.5 394.5,41.2 C395.9,42.0 398.5,40.4 399.8,40.7 C401.1,41.0 401.4,42.0 402.2,43.1 C403.0,44.2 403.1,46.8 404.4,47.5 C405.8,48.2 408.8,47.0 410.3,47.1 C411.7,47.3 412.0,49.4 413.3,48.4 C414.6,47.5 416.1,40.0 418.0,41.5 C420.0,43.1 423.6,58.6 425.0,57.5 C426.4,56.4 425.4,37.2 426.4,35.0 C427.4,32.7 429.4,41.8 430.7,44.0 C432.0,46.3 433.2,45.2 434.2,48.5 C435.3,51.8 435.6,65.4 437.2,63.9 C438.8,62.5 442.8,44.0 444.0,40.0" fill="none" stroke="#4a4a4a" stroke-width="1"/><path d="M10.6,45.2 C11.1,44.7 12.9,39.7 13.7,42.0 C14.5,44.4 14.5,56.8 15.3,59.4 C16.1,62.1 17.8,60.2 18.5,57.9 C19.1,55.5 18.6,47.1 19.2,45.2 C19.9,43.4 21.5,46.8 22.4,46.8 C23.3,46.8 23.9,46.7 24.8,45.2 C25.6,43.8 26.6,36.6 27.5,38.1 C28.5,39.5 29.3,51.3 30.3,53.9 C31.3,56.5 32.5,56.0 33.5,53.9 C34.5,51.8 35.3,39.0 36.2,41.3 C37.2,43.5 38.2,63.9 39.0,67.3 C39.9,70.8 40.7,66.0 41.4,61.8 C42.0,57.6 42.2,46.0 43.0,42.0 C43.8,38.1 45.1,38.5 46.1,38.1 C47.2,37.7 48.5,37.0 49.3,39.7 C50.1,42.3 50.3,49.3 50.9,53.9 C51.4,58.5 51.8,67.1 52.4,67.3 C53.1,67.6 54.6,59.7 54.8,55.5 C55.1,51.3 53.6,44.4 54.0,42.0 C54.4,39.7 56.1,39.5 57.2,41.3 C58.2,43.0 59.3,49.7 60.4,52.3 C61.4,55.0 62.6,58.2 63.5,57.1 C64.4,55.9 65.0,45.7 65.9,45.2 C66.8,44.7 67.7,53.4 69.1,53.9 C70.4,54.4 72.5,47.8 73.8,48.4 C75.1,48.9 75.8,58.1 77.0,57.1 C78.1,56.0 79.2,42.8 80.9,42.0 C82.6,41.3 85.5,53.5 87.2,52.3 C88.9,51.1 89.7,34.1 91.2,34.9 C92.6,35.7 94.6,56.4 95.9,57.1 C97.2,57.7 98.2,40.1 99.1,38.9 C100.0,37.7 100.0,50.7 101.5,49.9 C102.9,49.2 105.8,33.0 107.8,34.1 C109.8,35.3 111.8,53.6 113.3,57.1 C114.9,60.5 116.4,57.3 117.1,54.7 C117.9,52.1 117.1,42.3 117.9,41.3 C118.7,40.2 120.8,47.8 121.9,48.4 C122.9,48.9 123.2,47.8 124.2,44.4 C125.3,41.0 127.0,26.5 128.2,27.8 C129.4,29.1 130.2,50.3 131.4,52.3 C132.5,54.3 134.0,40.7 135.3,39.7 C136.6,38.6 138.1,42.3 139.3,46.0 C140.5,49.7 140.8,62.6 142.4,61.8 C144.0,61.0 146.9,45.6 148.8,41.3 C150.6,36.9 152.0,35.5 153.5,35.7 C154.9,36.0 156.4,42.3 157.4,42.8 C158.5,43.4 158.8,38.2 159.8,38.9 C160.9,39.5 161.9,44.9 163.8,46.8 C165.6,48.6 169.3,50.3 170.9,49.9 C172.5,49.6 172.3,44.4 173.3,44.4 C174.2,44.4 175.5,51.0 176.4,49.9 C177.3,48.9 177.9,39.5 178.8,38.1 C179.7,36.6 181.0,39.1 182.0,41.3 C182.9,43.4 183.4,50.7 184.3,50.7 C185.2,50.7 186.4,43.5 187.5,41.3 C188.5,39.0 189.6,36.6 190.7,37.3 C191.7,38.0 192.9,40.6 193.8,45.2 C194.7,49.8 195.4,64.0 196.2,65.0 C197.0,65.9 197.9,51.1 198.6,50.7 C199.2,50.3 199.5,63.9 200.1,62.6 C200.8,61.3 201.5,46.8 202.5,42.8 C203.6,38.9 205.1,38.4 206.5,38.9 C207.8,39.4 209.1,42.2 210.4,46.0 C211.7,49.8 213.3,60.8 214.4,61.8 C215.4,62.9 215.7,56.8 216.7,52.3 C217.8,47.8 220.1,37.7 220.7,34.9 C221.3,32.2 220.0,35.6 220.6,35.7 C221.1,35.9 222.9,34.3 223.7,35.7 C224.5,37.2 224.5,43.8 225.3,44.4 C226.1,45.1 227.4,37.2 228.5,39.7 C229.5,42.2 230.4,57.9 231.6,59.4 C232.8,61.0 234.3,48.9 235.6,49.2 C236.9,49.4 238.2,64.0 239.5,61.0 C240.8,58.0 242.3,35.1 243.5,31.0 C244.7,26.9 246.0,32.8 246.6,36.5 C247.3,40.2 246.9,52.3 247.4,53.1 C248.0,53.9 248.6,43.0 249.8,41.3 C251.0,39.5 253.2,43.5 254.5,42.8 C255.9,42.2 256.7,33.3 257.7,37.3 C258.7,41.3 259.6,64.3 260.5,66.5 C261.4,68.8 262.4,53.1 263.2,50.7 C264.1,48.4 265.1,50.6 265.6,52.3 C266.1,54.0 265.7,60.8 266.4,61.0 C267.1,61.3 268.6,57.5 269.6,53.9 C270.5,50.3 270.2,40.5 271.9,39.7 C273.6,38.9 277.7,48.6 279.8,49.2 C281.9,49.7 283.4,43.6 284.6,42.8 C285.8,42.0 285.9,43.0 287.0,44.4 C288.0,45.9 289.9,51.8 290.9,51.5 C292.0,51.3 292.4,41.5 293.3,42.8 C294.2,44.2 295.5,58.5 296.4,59.4 C297.4,60.4 297.9,49.8 298.8,48.4 C299.7,46.9 301.1,49.6 302.0,50.7 C302.9,51.9 303.6,54.8 304.3,55.5 C305.1,56.1 305.9,56.1 306.7,54.7 C307.5,53.2 307.9,47.6 309.1,46.8 C310.3,46.0 312.1,48.1 313.8,49.9 C315.5,51.8 317.8,58.4 319.4,57.9 C320.9,57.3 322.4,48.3 323.3,46.8 C324.2,45.2 324.0,47.8 324.8,48.5 C325.6,49.2 326.9,49.3 328.0,50.9 C329.0,52.5 330.5,60.4 331.1,58.1 C331.8,55.7 331.0,38.9 331.9,36.6 C332.9,34.3 335.9,40.0 336.7,44.5 C337.5,49.1 337.0,62.0 336.7,63.6 C336.4,65.2 334.6,57.0 335.1,54.1 C335.6,51.2 339.2,44.8 339.9,46.1 C340.5,47.5 338.2,59.7 339.1,62.0 C340.0,64.4 344.3,63.5 345.4,60.4 C346.6,57.4 345.6,46.3 346.2,43.8 C346.9,41.2 348.5,46.8 349.4,45.3 C350.3,43.9 350.6,35.8 351.8,35.0 C353.0,34.2 355.4,38.9 356.6,40.6 C357.8,42.3 357.6,45.1 359.0,45.3 C360.3,45.6 362.9,42.0 364.5,42.2 C366.1,42.3 367.0,46.0 368.5,46.1 C370.0,46.3 370.8,43.6 373.3,43.0 C375.8,42.3 381.4,42.7 383.6,42.2 C385.9,41.6 385.7,39.4 386.8,39.8 C387.8,40.2 388.4,43.8 390.0,44.5 C391.6,45.3 395.0,45.2 396.3,44.5 C397.6,43.9 397.0,39.8 397.9,40.6 C398.8,41.4 400.6,48.9 401.9,49.3 C403.2,49.7 404.5,43.5 405.9,43.0 C407.2,42.4 408.2,46.3 409.8,46.1 C411.4,46.0 413.8,40.6 415.4,42.2 C417.0,43.8 418.0,56.3 419.4,55.7 C420.7,55.0 422.3,39.5 423.3,38.2 C424.4,36.9 424.4,46.4 425.7,47.7 C427.1,49.1 429.8,44.0 431.3,46.1 C432.8,48.3 432.8,60.7 434.5,60.4 C436.2,60.2 440.4,47.2 441.6,44.5" fill="none" stroke="#e4e4e4" stroke-width="1.05"/></svg>
<div class="t" style="left:1199px;top:452.5px;font-size:10.5px;line-height:12px;color:#8c8c8c">:00</div>
<div class="t" style="left:1369.5px;top:452.5px;font-size:10.5px;line-height:12px;color:#8c8c8c">10:00</div>
<div class="t" style="left:1456.8px;top:452.5px;font-size:10.5px;line-height:12px;color:#8c8c8c">15:00</div>
<div class="t" style="left:1544.2px;top:452.5px;font-size:10.5px;line-height:12px;color:#8c8c8c">20:00</div>
<div class="t" style="left:1631.6px;top:452.5px;font-size:10.5px;line-height:12px;color:#8c8c8c">2</div>
<div class="a" style="left:1193.9px;top:534px;width:127.8px;height:32.5px;background:linear-gradient(#474747,#343434);border:1px solid #121212"></div>
<svg class="a" style="left:1194.9px;top:535px" width="100" height="30.5"><defs><linearGradient id="gb" x1="0" y1="0" x2="0" y2="1"><stop offset="0" stop-color="#47668f"/><stop offset="1" stop-color="#33496a"/></linearGradient></defs><polygon points="0,0 95.4,0 99.2,30.5 0,30.5" fill="url(#gb)"/><rect x="0" y="0" width="95.4" height="1" fill="#5a7db0" fill-opacity="0.7"/></svg>
<div class="t" style="left:1197.6px;top:542px;color:#a4adb9;font-size:12.5px;line-height:17px">Idle</div>
<div class="a" style="left:1290.2px;top:566.5px;width:334px;height:31.5px;background:linear-gradient(#47668f,#33496a);border:1px solid #121212;box-shadow:inset 0 1px 0 rgba(110,150,210,.45)"></div>
<div class="t" style="left:1294.6px;top:574px;color:#a4adb9;font-size:12.5px;line-height:17px">Terrified/Cower</div>

<div class="a" style="left:1192.2px;top:466px;width:2px;height:133px;background:#c4c4c4"></div>
<svg class="a" style="left:1187.5px;top:454.5px" width="12" height="12" viewBox="0 0 12 12"><path d="M1.5 0.5 H10.5 Q11.5 0.5 11.5 1.5 V5 L6 11.3 L0.5 5 V1.5 Q0.5 0.5 1.5 0.5 Z" fill="#3f8ff0" stroke="#1d3f6a" stroke-width="0.8"/></svg>
<svg class="a" style="left:1280px;top:452px" width="24" height="14" viewBox="0 0 24 14"><path d="M1.3 1 V13" stroke="#c4c4c4" stroke-width="1.2"/><path d="M2 7 Q5 3.5 8 7 Q5 10.5 2 7 Z" fill="none" stroke="#3f8ff0" stroke-width="1.2"/><circle cx="5" cy="7" r="1" fill="#3f8ff0"/><path d="M9.5 2 V12.5" stroke="#3f8ff0" stroke-width="1.3"/><path d="M14.5 1.5 V12.5" stroke="#3f8ff0" stroke-width="1.3"/><path d="M22 1.5 L15.5 7 L22 12.5 Z" fill="#3f8ff0"/></svg>
<div class="a" style="left:1184px;top:611px;width:460px;height:50px;border:1px solid #242424;border-radius:3px;background:#3c3c3c;overflow:hidden">
<div class="a" style="left:0;top:0;width:460px;height:18.5px;background:#363636;border-bottom:1px solid #242424"></div>
</div>
<div class="t" style="left:1192.4px;top:613.37px;font-size:12.5px;line-height:17px;color:#c4c4c4;">Conditions</div>
<div class="a" style="left:1190px;top:643px;width:10px;height:1px;background:#6c6c6c;box-shadow:0 4px 0 #6c6c6c"></div>
<div class="a" style="left:1205.8px;top:638px;width:208.5px;height:16.5px;background:#515151;border:1px solid #2c2c2c;border-radius:3px"></div>
<div class="t" style="left:1209px;top:638.57px;font-size:12.5px;line-height:17px;color:#d2d2d2;">IsCowering</div>
<svg class="a" style="left:1401px;top:643.6px" width="8" height="6"><path d="M0 0 H8 L4 5.5 Z" fill="#d0d0d0"/></svg>
<div class="a" style="left:1421.6px;top:638px;width:208.5px;height:16.5px;background:#515151;border:1px solid #2c2c2c;border-radius:3px"></div>
<div class="t" style="left:1425px;top:638.57px;font-size:12.5px;line-height:17px;color:#d2d2d2;">true</div>
<svg class="a" style="left:1617px;top:643.6px" width="8" height="6"><path d="M0 0 H8 L4 5.5 Z" fill="#d0d0d0"/></svg>
<div class="a" style="left:1570.9px;top:660.5px;width:56.5px;height:19.5px;background:#3c3c3c;border:1px solid #242424;border-top:none;border-radius:0 0 3px 3px"></div>
<svg class="a" style="left:1580.5px;top:664px" width="11" height="11"><path d="M5.5 0.5 V10.5 M0.5 5.5 H10.5" stroke="#dcdcdc" stroke-width="1.7"/></svg>
<div class="a" style="left:1606.5px;top:669px;width:8.5px;height:1.8px;background:#dcdcdc"></div>
</body></html>
